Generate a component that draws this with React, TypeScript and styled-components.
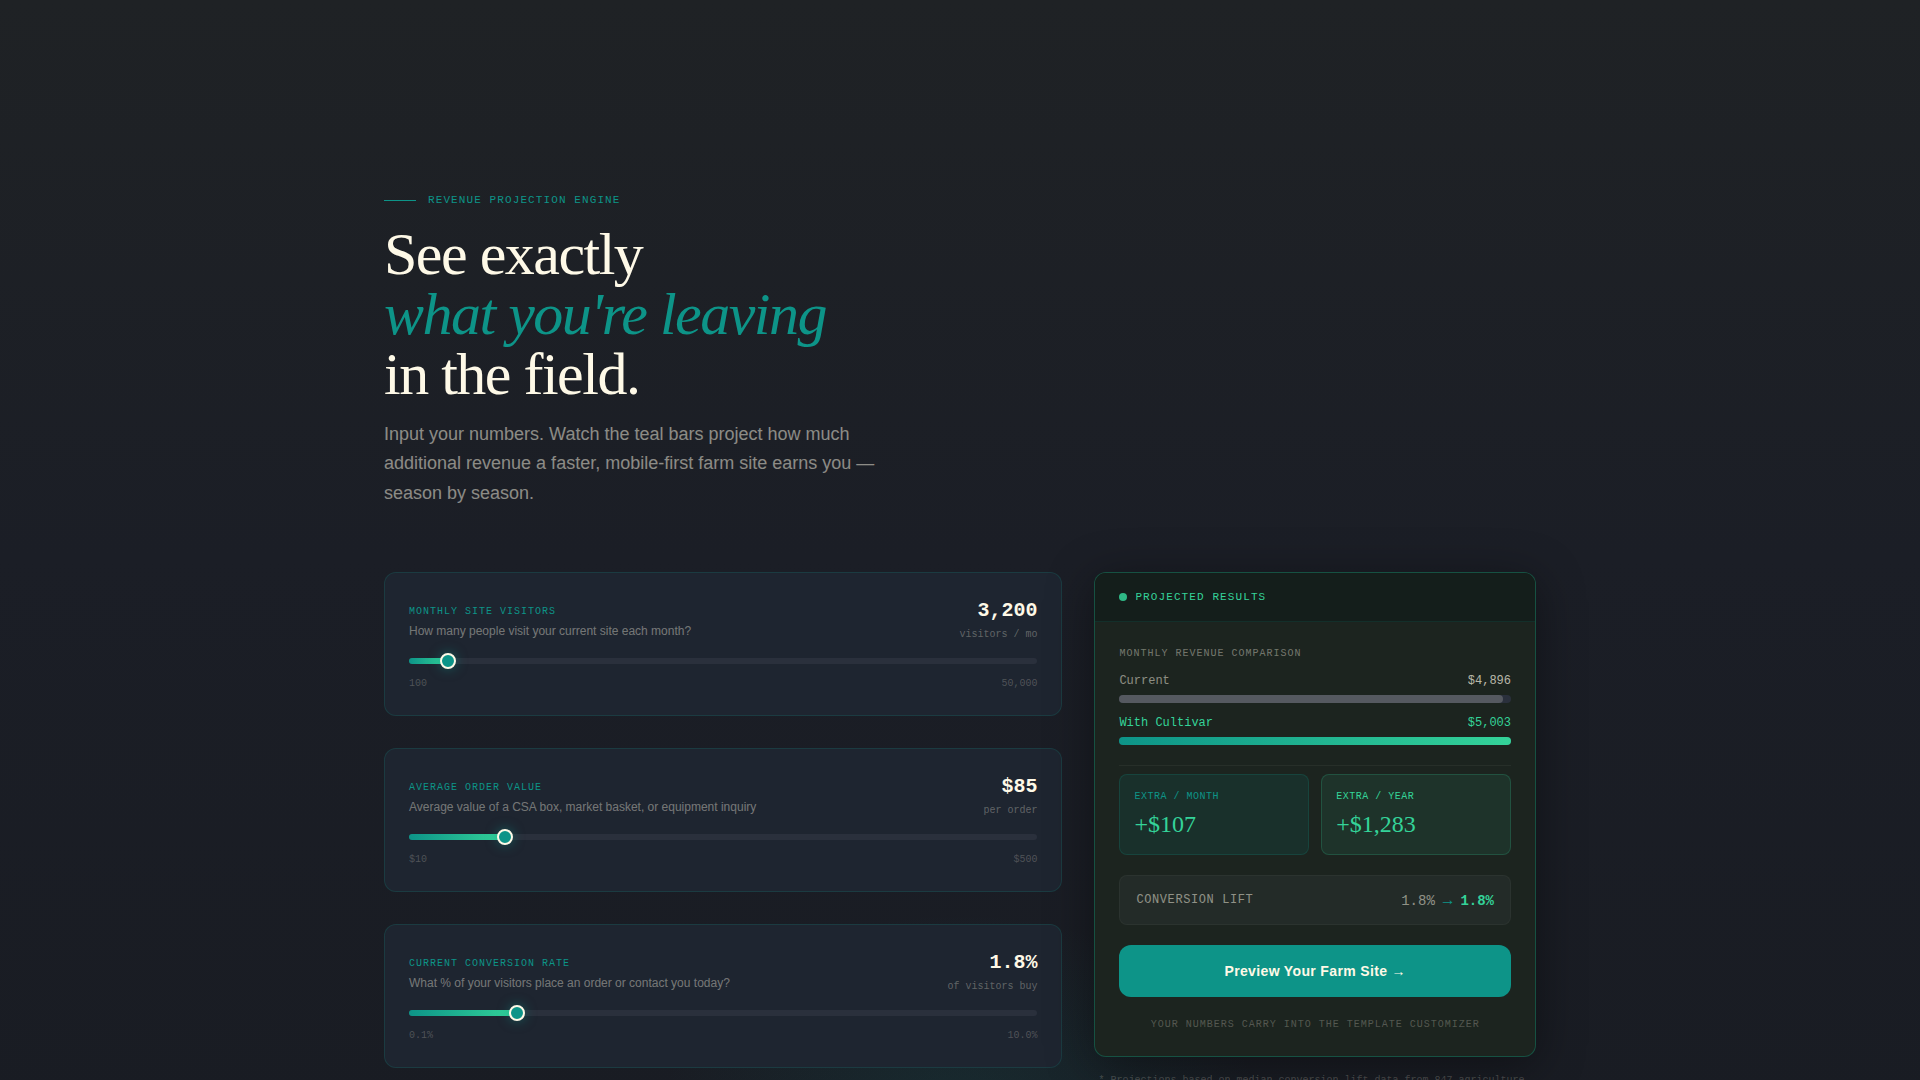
import React, { useState } from "react";
import styled, { createGlobalStyle } from "styled-components";

const sans = `"Liberation Sans", Arial, sans-serif`;
const serif = `"Liberation Serif", "Times New Roman", serif`;
const mono = `"Liberation Mono", "Courier New", monospace`;

const color = {
  cream: "#fef9e7",
  teal: "#0d9488",
  mint: "#34d399",
};

const GlobalStyle = createGlobalStyle`
  *, *::before, *::after { box-sizing: border-box; }
  body { margin: 0; background: #1a1d24; font-family: ${sans}; color: ${color.cream}; }
  h1, h2, p, dl, dd { margin: 0; }
`;

const Section = styled.section`
  min-height: 100vh;
  padding: 192px 0 24px;
  background:
    radial-gradient(ellipse 300px 200px at 50% 100%, rgba(13, 148, 136, 0.12), transparent),
    linear-gradient(180deg, #1f2225 0%, #1b1e26 50%, #191c23 100%);
`;

const Container = styled.div`
  max-width: 1200px;
  margin: 0 auto;
  padding: 0 24px;
`;

const Intro = styled.header`
  max-width: 512px;
  margin-bottom: 64px;
`;

const Eyebrow = styled.p`
  display: flex;
  align-items: center;
  gap: 12px;
  margin-bottom: 16px;
  font: 11px/16px ${mono};
  letter-spacing: 0.1em;
  text-transform: uppercase;
  color: ${color.teal};

  &::before {
    content: "";
    width: 32px;
    height: 1px;
    background: ${color.teal};
  }
`;

const Title = styled.h1`
  margin-bottom: 16px;
  font: 400 60px/60px ${serif};
  letter-spacing: -0.025em;
  white-space: nowrap;

  em {
    color: ${color.teal};
  }
`;

const Lead = styled.p`
  font-size: 18px;
  line-height: 1.625;
  color: rgba(254, 249, 231, 0.5);
`;

const Columns = styled.div`
  display: grid;
  grid-template-columns: repeat(5, 1fr);
  gap: 32px;
  align-items: start;
`;

const Inputs = styled.div`
  grid-column: span 3;
  display: grid;
  gap: 32px;
`;

const Card = styled.div`
  padding: 24px;
  border: 1px solid rgba(13, 148, 136, 0.2);
  border-radius: 12px;
  background: #1e2530;
`;

const CardHead = styled.div`
  display: flex;
  justify-content: space-between;
  margin-bottom: 16px;
`;

const CardText = styled.div`
  padding-top: 7px;
`;

const Label = styled.label`
  display: block;
  margin-bottom: 3px;
  font: 10px/15px ${mono};
  letter-spacing: 0.1em;
  text-transform: uppercase;
  color: ${color.teal};
`;

const Hint = styled.p`
  font-size: 12px;
  line-height: 18px;
  color: rgba(254, 249, 231, 0.4);
`;

const Reading = styled.div`
  text-align: right;
  font-family: ${mono};
`;

const Value = styled.output`
  display: block;
  margin-bottom: 2px;
  font-size: 20px;
  font-weight: 700;
  line-height: 28px;
`;

const Unit = styled.span`
  display: block;
  font-size: 10px;
  line-height: 15px;
  color: rgba(254, 249, 231, 0.3);
`;

const Slider = styled.div`
  position: relative;
  height: 6px;
  margin-bottom: 12px;
  border-radius: 3px;
  background: #2a303c;
`;

const SliderFill = styled.div`
  height: 100%;
  border-radius: 3px;
  background: linear-gradient(90deg, ${color.teal}, ${color.mint});
`;

const thumb = `
  box-sizing: border-box;
  width: 16px;
  height: 16px;
  border: 2px solid ${color.cream};
  border-radius: 50%;
  background: ${color.teal};
  box-shadow: 0 0 12px rgba(13, 148, 136, 0.5);
`;

const Range = styled.input`
  appearance: none;
  position: absolute;
  inset: -5px -8px;
  width: calc(100% + 16px);
  height: 16px;
  margin: 0;
  background: transparent;
  cursor: pointer;

  &::-webkit-slider-thumb { appearance: none; ${thumb} }
  &::-moz-range-thumb { ${thumb} }
`;

const Bounds = styled.div`
  display: flex;
  justify-content: space-between;
  font: 10px/15px ${mono};
  color: rgba(254, 249, 231, 0.22);
`;

const Results = styled.aside`
  grid-column: span 2;
`;

const Panel = styled.div`
  overflow: hidden;
  border: 1px solid rgba(16, 150, 120, 0.4);
  border-radius: 12px;
  background: #1c241f;
  box-shadow: 0 8px 48px rgba(0, 0, 0, 0.4);
`;

const PanelHead = styled.h2`
  display: flex;
  align-items: center;
  gap: 8px;
  padding: 16px 24px;
  border-bottom: 1px solid rgba(13, 148, 136, 0.15);
  background: #141e1b;
  font: 400 11px/16px ${mono};
  letter-spacing: 0.1em;
  text-transform: uppercase;
  color: ${color.mint};

  &::before {
    content: "";
    width: 8px;
    height: 8px;
    border-radius: 50%;
    background: ${color.mint};
    opacity: 0.85;
  }
`;

const PanelBody = styled.div`
  display: grid;
  gap: 20px;
  padding: 24px;
`;

const Caption = styled.p<{ $centered?: boolean }>`
  font: 10px/15px ${mono};
  letter-spacing: 0.1em;
  text-transform: uppercase;
  text-align: ${(p) => (p.$centered ? "center" : "left")};
  color: rgba(254, 249, 231, ${(p) => (p.$centered ? 0.25 : 0.4)});
`;

const Comparison = styled.div`
  display: grid;
  gap: 12px;
`;

const BarLine = styled.div<{ $accent?: boolean }>`
  display: flex;
  justify-content: space-between;
  margin-bottom: 6px;
  font: 12px/16px ${mono};
  color: ${(p) => (p.$accent ? color.mint : "rgba(254, 249, 231, 0.5)")};

  span:last-child {
    color: ${(p) => (p.$accent ? color.mint : "rgba(254, 249, 231, 0.7)")};
  }
`;

const Bar = styled.div`
  height: 8px;
  border-radius: 4px;
  background: #2a303c;
`;

const BarFill = styled.div<{ $accent?: boolean }>`
  height: 100%;
  border-radius: 4px;
  background: ${(p) =>
    p.$accent ? `linear-gradient(90deg, ${color.teal}, ${color.mint})` : "#555960"};
`;

const Gains = styled.dl`
  display: grid;
  grid-template-columns: 1fr 1fr;
  gap: 12px;
  padding-top: 8px;
  border-top: 1px solid rgba(254, 249, 231, 0.05);
`;

const Gain = styled.div<{ $accent?: boolean }>`
  padding: 14px;
  border: 1px solid ${(p) => (p.$accent ? "rgba(52, 211, 153, 0.2)" : "rgba(13, 148, 136, 0.2)")};
  border-radius: 8px;
  background: ${(p) => (p.$accent ? "#1e332a" : "#19302b")};

  dt {
    margin-bottom: 4px;
    font: 10px/15px ${mono};
    letter-spacing: 0.05em;
    text-transform: uppercase;
    color: ${(p) => (p.$accent ? color.mint : color.teal)};
  }

  dd {
    font: 24px/32px ${serif};
    color: ${color.mint};
  }
`;

const Lift = styled.div`
  display: flex;
  align-items: center;
  justify-content: space-between;
  height: 50px;
  padding: 0 16px;
  border: 1px solid rgba(254, 249, 231, 0.04);
  border-radius: 8px;
  background: #232b28;
  font: 12px/20px ${mono};
  color: rgba(254, 249, 231, 0.5);
`;

const LiftLabel = styled.span`
  letter-spacing: 0.05em;
  text-transform: uppercase;
`;

const LiftChange = styled.span`
  display: flex;
  gap: 8px;
  padding-top: 2px;
  font-size: 14px;
`;

const LiftArrow = styled.span`
  font-size: 16px;
  color: ${color.teal};
`;

const LiftTarget = styled.strong`
  color: ${color.mint};
`;

const Preview = styled.button`
  width: 100%;
  height: 52px;
  border: 0;
  border-radius: 12px;
  background: ${color.teal};
  color: ${color.cream};
  font: 700 14px/20px ${sans};
  letter-spacing: 0.025em;
  cursor: pointer;
`;

const Footnote = styled.p`
  margin-top: 16px;
  padding: 0 4px;
  font: 10px/16px ${mono};
  color: rgba(254, 249, 231, 0.2);
`;

type Field = {
  id: string;
  label: string;
  hint: string;
  unit: string;
  min: number;
  max: number;
  step: number;
  format: (n: number) => string;
};

const money = (n: number) => "$" + Math.round(n).toLocaleString("en-US");
const percent = (n: number) => n.toFixed(1) + "%";

const fields: Field[] = [
  {
    id: "visitors",
    label: "Monthly Site Visitors",
    hint: "How many people visit your current site each month?",
    unit: "visitors / mo",
    min: 100,
    max: 50000,
    step: 100,
    format: (n) => n.toLocaleString("en-US"),
  },
  {
    id: "order",
    label: "Average Order Value",
    hint: "Average value of a CSA box, market basket, or equipment inquiry",
    unit: "per order",
    min: 10,
    max: 500,
    step: 5,
    format: money,
  },
  {
    id: "rate",
    label: "Current Conversion Rate",
    hint: "What % of your visitors place an order or contact you today?",
    unit: "of visitors buy",
    min: 0.1,
    max: 10,
    step: 0.1,
    format: percent,
  },
];

const LIFT = 1.02184;

export default function App() {
  const [values, setValues] = useState<Record<string, number>>({
    visitors: 3200,
    order: 85,
    rate: 1.8,
  });

  const current = (values.visitors * values.order * values.rate) / 100;
  const projected = current * LIFT;
  const extra = projected - current;

  return (
    <>
      <GlobalStyle />
      <Section>
        <Container>
          <Intro>
            <Eyebrow>Revenue Projection Engine</Eyebrow>
            <Title>
              See exactly
              <br />
              <em>what you're leaving</em>
              <br />
              in the field.
            </Title>
            <Lead>
              Input your numbers. Watch the teal bars project how much additional revenue a
              faster, mobile-first farm site earns you — season by season.
            </Lead>
          </Intro>

          <Columns>
            <Inputs>
              {fields.map((f) => {
                const value = values[f.id];
                const fill = ((value - f.min) / (f.max - f.min)) * 100;
                return (
                  <Card key={f.id}>
                    <CardHead>
                      <CardText>
                        <Label htmlFor={f.id}>{f.label}</Label>
                        <Hint>{f.hint}</Hint>
                      </CardText>
                      <Reading>
                        <Value htmlFor={f.id}>{f.format(value)}</Value>
                        <Unit>{f.unit}</Unit>
                      </Reading>
                    </CardHead>
                    <Slider>
                      <SliderFill style={{ width: `${fill}%` }} />
                      <Range
                        id={f.id}
                        type="range"
                        min={f.min}
                        max={f.max}
                        step={f.step}
                        value={value}
                        onChange={(e) =>
                          setValues({ ...values, [f.id]: Number(e.target.value) })
                        }
                      />
                    </Slider>
                    <Bounds>
                      <span>{f.format(f.min)}</span>
                      <span>{f.format(f.max)}</span>
                    </Bounds>
                  </Card>
                );
              })}
            </Inputs>

            <Results>
              <Panel>
                <PanelHead>Projected Results</PanelHead>
                <PanelBody>
                  <Comparison>
                    <Caption>Monthly Revenue Comparison</Caption>
                    <div>
                      <BarLine>
                        <span>Current</span>
                        <span>{money(current)}</span>
                      </BarLine>
                      <Bar>
                        <BarFill style={{ width: `${(current / projected) * 100}%` }} />
                      </Bar>
                    </div>
                    <div>
                      <BarLine $accent>
                        <span>With Cultivar</span>
                        <span>{money(projected)}</span>
                      </BarLine>
                      <Bar>
                        <BarFill $accent />
                      </Bar>
                    </div>
                  </Comparison>
                  <Gains>
                    <Gain>
                      <dt>Extra / Month</dt>
                      <dd>+{money(extra)}</dd>
                    </Gain>
                    <Gain $accent>
                      <dt>Extra / Year</dt>
                      <dd>+{money(extra * 12)}</dd>
                    </Gain>
                  </Gains>
                  <Lift>
                    <LiftLabel>Conversion Lift</LiftLabel>
                    <LiftChange>
                      <span>{percent(values.rate)}</span>
                      <LiftArrow>→</LiftArrow>
                      <LiftTarget>{percent(values.rate * LIFT)}</LiftTarget>
                    </LiftChange>
                  </Lift>
                  <Preview type="button">Preview Your Farm Site →</Preview>
                  <Caption $centered>Your numbers carry into the template customizer</Caption>
                </PanelBody>
              </Panel>
              <Footnote>
                * Projections based on median conversion lift data from 847 agriculture
              </Footnote>
            </Results>
          </Columns>
        </Container>
      </Section>
    </>
  );
}
